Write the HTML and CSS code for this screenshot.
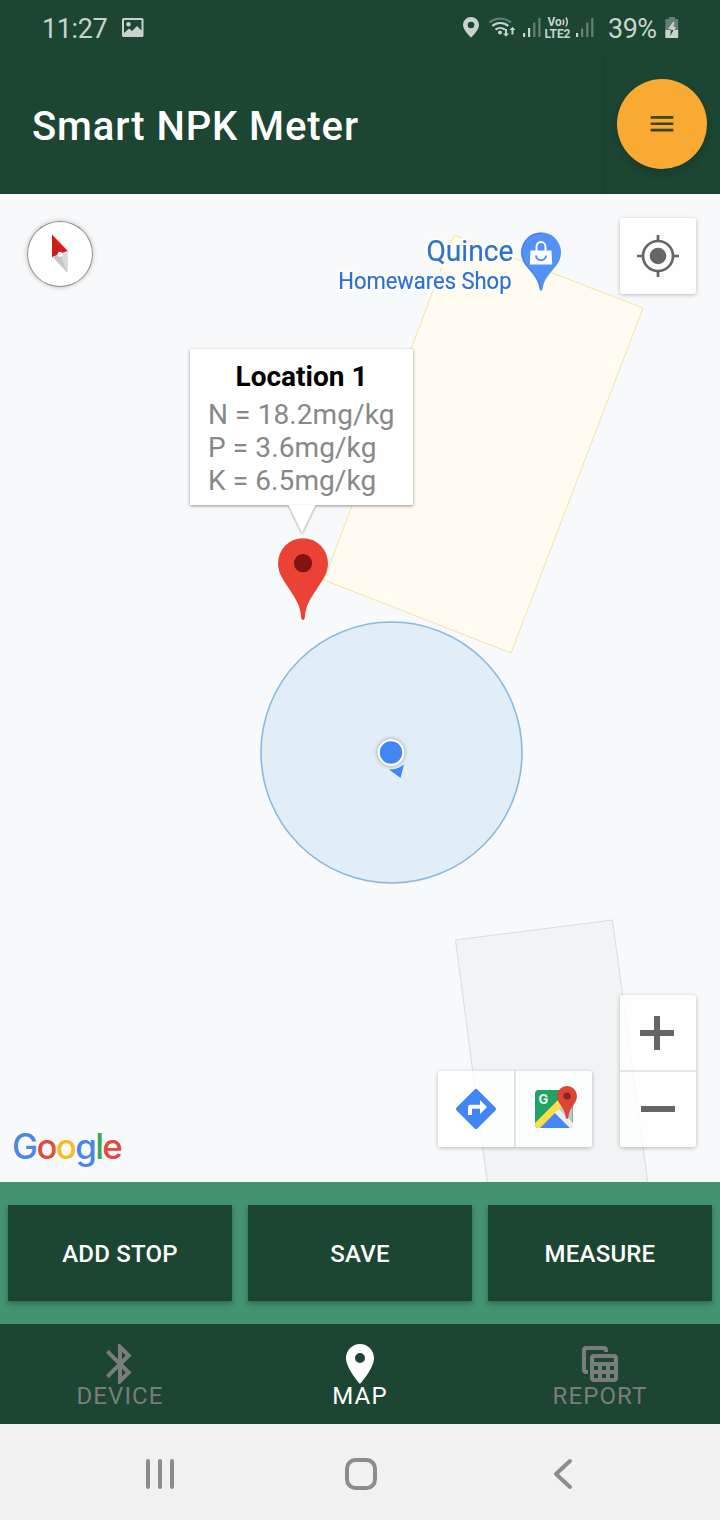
FILE: index.html
```html
<!DOCTYPE html>
<html lang="en">
<head>
<meta charset="utf-8">
<title>Smart NPK Meter</title>
<link rel="stylesheet" href="styles.css">
</head>
<body>
<div class="screen">
  <header class="status">
    <span class="clock">11:27</span>
    <svg class="picture-icon" width="22" height="20" viewBox="0 0 22 20"><path fill-rule="evenodd" d="M2 0h18a1.500 1.500 0 0 1 1.500 1.500v16a1.500 1.500 0 0 1-1.500 1.500H1.500A1.500 1.500 0 0 1 0 17.500v-16A1.500 1.500 0 0 1 1.500 0zM2 2v13l5-4.500 3 2.500 5-5 4.500 4.500V2zM6.500 4a2.300 2.300 0 1 1 0 4.600 2.300 2.300 0 0 1 0-4.600z"/></svg>
    <svg class="signals" width="140" height="32" viewBox="460 10 140 32">
      <path fill-rule="evenodd" d="M471 17a8 8 0 0 0-8 8c0 5.500 8 12.500 8 12.500s8-7 8-12.500a8 8 0 0 0-8-8zm0 4.700a3.300 3.300 0 1 1 0 6.600 3.300 3.300 0 0 1 0-6.600z"/>
      <g fill="none" stroke="#c8d3cd" stroke-width="2.200">
        <path opacity=".4" d="M489.500 22.500c6-5.200 15.500-5.200 21.500 0"/>
        <path d="M492.300 26c4.500-4 11.500-4 16 0M495.500 29.700c2.700-2.300 6.700-2.300 9.400 0"/>
      </g>
      <circle cx="500" cy="32.500" r="2"/>
      <path d="M505 29h2v4.500h2l-3 3.300-3-3.300h2zM511.500 34.500h2v-4.500h2l-3-3.300-3 3.300h2z"/>
      <path d="M523 33h2.200v4H523zM528 28h2.200v9H528zM576 33h2.200v4H576z"/>
      <path opacity=".42" d="M533.200 22.500h2.200V37h-2.200zM538.300 18h2.200v19h-2.200zM581 28.500h2.200V37H581zM586.200 22.500h2.200V37h-2.200zM591.200 18h2.200v19h-2.200z"/>
      <text x="547.500" y="26" class="net">Vo</text>
      <path fill="none" stroke="#c8d3cd" stroke-width="1.500" d="M563 19.500q1.600 2.500 0 5.500M566 17.500q2.600 4.200 0 9"/>
      <text x="544.500" y="37.500" class="net" textLength="26">LTE2</text>
    </svg>
    <span class="charge">39%</span>
    <svg class="battery" width="14" height="22" viewBox="0 0 14 22"><path opacity=".42" d="M4 0h6v2h3.200v11H.3V2H4z"/><path d="M.3 13h12.900v8H.3z"/><path d="M8 5l-5 7h3.200L6 14h3l2-4H8.300L9.500 5z"/><path fill="#1c4532" d="M6 13l-.8 6L8.500 13z"/></svg>
  </header>
  <div class="appbar">
    <h1>Smart NPK Meter</h1>
    <div class="menu-cell"><button class="menu" aria-label="Menu"><svg width="24" height="18" viewBox="0 0 24 18"><path d="M.7 1h22.600v2.700H.7zM.7 7.500h22.600v2.600H.7zM.7 13.700h22.600v2.700H.7z" fill="#3f4310"/></svg></button></div>
  </div>
  <main class="map">
    <svg class="ground" width="720" height="988" viewBox="0 194 720 988">
      <path d="M454 235L643 308 511 653 324 580z" fill="#fffbf0" stroke="#f6e0a4"/>
      <path d="M455.500 940L612.500 920 648 1184H487.500z" fill="#f1f3f4" stroke="#d9dbde"/>
      <circle cx="391.500" cy="752.500" r="130.500" fill="#e1eef8" stroke="#89b9de" stroke-width="1.600"/>
      <path d="M389 769.500q8 .5 15-5l-3.500 13.500z" fill="#4285f4"/>
      <circle class="dot" cx="391" cy="752.500" r="12.300" fill="#4285f4" stroke="#fff" stroke-width="2.200"/>
      <path d="M303 538.200a25 25 0 0 0-25 25c0 10 5.500 17 11 25.500 7 10.500 11.500 17 12.200 29q.2 2.300 1.800 2.300t1.800-2.300c.7-12 5.200-18.500 12.200-29 5.500-8.500 11-15.500 11-25.500a25 25 0 0 0-25-25z" fill="#ea4335"/>
      <circle cx="303" cy="563.200" r="9.100" fill="#811411"/>
    </svg>
    <div class="place">
      <div class="place-text"><span class="place-name">Quince</span><span class="place-kind">Homewares Shop</span></div>
      <svg width="42" height="60" viewBox="520 232 42 60">
        <path d="M541 232.300a20 20 0 0 0-20 20c0 8 4 12.500 9 18.500 5 6.200 8 10 9.300 17.500q.4 2.700 1.700 2.700t1.700-2.700c1.300-7.500 4.300-11.300 9.300-17.500 5-6 9-10.500 9-18.500a20 20 0 0 0-20-20z" fill="#5491f5"/>
        <path d="M541 233.300a19 19 0 0 0-19 19c0 7.500 4 12 9 18 5 6 8 10 9.300 17" fill="none" stroke="#3f7fe8"/>
        <path d="M530.500 250.500h21l.7 14h-22.400z" fill="#fff"/>
        <path d="M536.500 251v-4a4.500 5 0 0 1 9 0v4" fill="none" stroke="#fff" stroke-width="2"/>
        <path d="M536 255.500a5 4.800 0 0 0 10 0" fill="none" stroke="#5491f5" stroke-width="2"/>
      </svg>
    </div>
    <div class="compass"><svg width="66" height="66" viewBox="27 221 66 66"><path d="M52 234.500L67.800 251 60 254 52 257z" fill="#df1b18"/><path d="M52 234.500L60 254l-8 3z" fill="#c91c1c"/><path d="M52.500 257l7.500-3 7.800-3.200v22z" fill="#d9d9d9"/><path d="M52.500 257l7.500-3 7.500 18.800z" fill="#c5c5c5"/><circle cx="60" cy="254.300" r="2.500" fill="#fff"/></svg></div>
    <button class="ctl locate" aria-label="My location"><svg width="42" height="42" viewBox="0 0 42 42"><circle cx="21" cy="21" r="15" fill="none" stroke="#666" stroke-width="2.700"/><circle cx="21" cy="21" r="8.300" fill="#666"/><path d="M21 0v6M21 36v6M0 21h6M36 21h6" stroke="#666" stroke-width="2.700"/></svg></button>
    <section class="info">
      <h2>Location 1</h2>
      <p>N = 18.2mg/kg</p>
      <p>P = 3.6mg/kg</p>
      <p>K = 6.5mg/kg</p>
      <svg class="tail" width="30" height="30" viewBox="0 0 30 30"><path d="M1.500 0h27L15 28z" fill="#fff"/></svg>
    </section>
    <div class="ctl links">
      <button aria-label="Directions"><svg width="42" height="42" viewBox="0 0 42 42"><path d="M19.600 1.500q1.400-1.400 2.800 0l18 18q1.400 1.500 0 3l-18 18q-1.400 1.400-2.800 0l-18-18q-1.400-1.500 0-3z" fill="#4285f4"/><path d="M13 27v-8q0-2.200 2.200-2.200H25V12l7 7-7 7v-5.200h-8V27z" fill="#fff"/></svg></button>
      <button aria-label="Open in Maps"><svg width="44" height="44" viewBox="533 1085 44 44">
        <rect x="535" y="1090" width="38" height="38" rx="3.500" fill="#1fa463"/>
        <path d="M554 1109l18.500-18.500v35q0 2.500-2.500 2.500h-33z" fill="#c5c5c5"/>
        <path d="M538 1128l16-16 16 16z" fill="#4688f1"/>
        <path d="M554 1112l4-4 15 15v2q0 3-3 3z" fill="#eee"/>
        <path d="M535 1123l25-25 4 6-24 24h-2q-3 0-3-3z" fill="#fcdd4b"/>
        <path d="M567 1086a10 10 0 0 0-10 10c0 8 8 11 8.700 21.500q.1 1.300 1.300 1.300t1.300-1.300C569 1107 577 1104 577 1096a10 10 0 0 0-10-10z" fill="#db4437"/>
        <circle cx="567" cy="1096" r="3.600" fill="#85261f"/>
        <text x="538.500" y="1103.500" class="mini-g">G</text>
      </svg></button>
    </div>
    <div class="ctl zoom">
      <button aria-label="Zoom in"><svg width="34" height="34" viewBox="0 0 34 34"><path d="M14 0h6v14h14v6H20v14h-6V20H0v-6h14z" fill="#666"/></svg></button>
      <button aria-label="Zoom out"><svg width="34" height="34" viewBox="0 0 34 34"><path d="M0 14h34v6H0z" fill="#666"/></svg></button>
    </div>
    <div class="brand"><span class="b">G</span><span class="r">o</span><span class="y">o</span><span class="b">g</span><span class="g">l</span><span class="r">e</span></div>
  </main>
  <div class="actions"><button>ADD STOP</button><button>SAVE</button><button>MEASURE</button></div>
  <nav class="tabs">
    <a class="tab"><svg width="40" height="40" viewBox="0 0 40 40"><path fill-rule="evenodd" d="M18 0h2l11.500 11.400L23 20l8.500 8.600L20 40h-2V24.800L8.800 34 6 31.200 17.200 20 6 8.800 8.800 6 18 15.200zM22 7.700v7.500l3.700-3.800zM22 24.800v7.500l3.700-3.700z"/></svg><span>DEVICE</span></a>
    <a class="tab on"><svg width="40" height="40" viewBox="0 0 40 40"><path fill-rule="evenodd" d="M20 0C12.300 0 6 6.300 6 14c0 10.500 14 26 14 26s14-15.500 14-26c0-7.700-6.300-14-14-14zm0 9a5 5 0 1 1 0 10 5 5 0 0 1 0-10z"/></svg><span>MAP</span></a>
    <a class="tab"><svg width="40" height="40" viewBox="0 0 40 40"><path d="M6 2h18q4 0 4 4v2h-4V6H6v20h2v4H6q-4 0-4-4V6q0-4 4-4z"/><path fill-rule="evenodd" d="M14 10h20q4 0 4 4v20q0 4-4 4H14q-4 0-4-4V14q0-4 4-4zM14 14v4h20v-4zM14 22v4h4v-4zM22 22v4h4v-4zM30 22v4h4v-4zM14 30v4h4v-4zM22 30v4h4v-4zM30 30v4h4v-4z"/></svg><span>REPORT</span></a>
  </nav>
  <footer class="sysnav">
    <svg width="28" height="30" viewBox="0 0 28 30"><path d="M2 2v26M14 2v26M26 2v26"/></svg>
    <svg class="home" width="32" height="32" viewBox="0 0 32 32"><rect x="2" y="2" width="28" height="28" rx="8.500"/></svg>
    <svg width="20" height="32" viewBox="0 0 20 32"><path d="M17 3L3 16l14 13"/></svg>
  </footer>
</div>
</body>
</html>
```
FILE: styles.css
```css
* { box-sizing: border-box; }
body { margin: 0; font-family: Roboto, "Liberation Sans", sans-serif; }
h1, h2, p { margin: 0; font-weight: 400; }
button { border: 0; margin: 0; padding: 0; background: none; font: inherit; color: inherit; }
svg { display: block; flex: none; }

.screen { width: 720px; height: 1520px; display: flex; flex-direction: column; overflow: hidden; }

.status { height: 56px; background: #1c4532; color: #c8d3cd; fill: #c8d3cd; display: flex; align-items: center; padding: 0 41px 0 42px; font-size: 27px; }
.clock { width: 80px; letter-spacing: -.4px; padding-top: 1px; }
.signals { margin-left: auto; margin-top: -4px; }
.charge { width: 57px; margin: 1px 0 0 8px; font-size: 27px; letter-spacing: -.5px; }
.picture-icon { margin-top: -1px; }
.status .battery { margin-top: -1px; }
.net { font-size: 12px; font-weight: 700; }

.appbar { height: 138px; background: #1c4532; display: flex; justify-content: space-between; }
.appbar h1 { padding: 47px 0 0 32px; line-height: 48px; font-size: 40px; font-weight: 500; letter-spacing: .900px; color: #fff; }
.menu-cell { width: 117px; padding: 23px 13px 0 12px; border-left: 2px solid #1a4030; }
.menu { width: 90px; height: 90px; border-radius: 50%; background: #f9aa33; display: flex; align-items: center; justify-content: center; box-shadow: 0 4px 8px rgba(0,0,0,.16); }

.map { position: relative; height: 988px; background: #f8f9fb; overflow: hidden; }
.dot { filter: drop-shadow(0 0 2px rgba(0,0,0,.35)); }
.place { position: absolute; top: 38px; right: 158px; display: flex; gap: 7px; }
.place-text { display: flex; flex-direction: column; align-items: flex-end; color: #2b72d3; text-shadow: 3px 0 1px #fffdf8, -3px 0 1px #fffdf8, 0 3px 1px #fffdf8, 0 -3px 1px #fffdf8, 2px 2px 1px #fffdf8, -2px -2px 1px #fffdf8, 2px -2px 1px #fffdf8, -2px 2px 1px #fffdf8; transform: scaleX(.955); transform-origin: right; -webkit-text-stroke: .2px #2b72d3; }
.place-name { font-size: 29.500px; line-height: 38px; }
.place-kind { font-size: 23px; line-height: 23px; margin-right: 2px; }

.compass { position: absolute; left: 27px; top: 27px; width: 66px; height: 66px; border-radius: 50%; background: #fff; box-shadow: inset 0 0 0 1px #8e8e8e, 0 0 5px rgba(0,0,0,.25); }
.ctl { position: absolute; background: rgba(255,255,255,.8); border-radius: 3px; box-shadow: 0 1px 4px rgba(0,0,0,.26); display: flex; }
.ctl button, .locate { display: flex; align-items: center; justify-content: center; }
.locate { top: 24px; right: 24px; width: 76px; height: 76px; }
.links { left: 438px; top: 877px; width: 154px; height: 76px; }
.links button { width: 76px; padding-bottom: 1px; }
.links button + button { width: 78px; border-left: 2px solid #e1e1e1; padding: 0 0 4px 2px; }
.zoom { right: 24px; top: 801px; width: 76px; height: 152px; flex-direction: column; }
.zoom button { height: 75px; padding: 1px 2px 0 0; }
.zoom button + button { height: 77px; border-top: 2px solid #e6e6e6; padding: 0 0 1px; }
.mini-g { font: 700 13px Inter, sans-serif; fill: #eef8f2; }

.info { position: absolute; left: 190px; top: 155px; width: 223px; height: 156px; padding: 10px 18px 0; background: #fff; box-shadow: 0 1px 3px rgba(0,0,0,.42); }
.info h2 { font-size: 28px; line-height: 36px; font-weight: 700; color: #000; text-align: center; white-space: nowrap; }
.info p { font-size: 28px; line-height: 33px; letter-spacing: .100px; color: #888; white-space: nowrap; }
.info h2 + p { margin-top: 3px; }
.tail { position: absolute; left: 97px; top: 156px; filter: drop-shadow(0 1px 1px rgba(0,0,0,.4)); }

.brand { position: absolute; left: 12px; top: 930px; font: 500 35px/44px Inter, sans-serif; letter-spacing: -1.750px; text-shadow: 0 0 3px #fff, 0 0 4px #fff; }
.b { color: #4a85ec; }
.r { color: #e04a3f; }
.y { color: #f4bd1c; }
.g { color: #3ca556; }

.actions { height: 142px; background: #43936f; display: flex; gap: 16px; padding: 23px 8px; }
.actions button { flex: 1; padding-top: 2px; background: #1c4532; color: #fff; font-size: 24px; font-weight: 500; letter-spacing: .200px; box-shadow: 0 3px 5px rgba(0,0,0,.28); }

.tabs { height: 100px; background: #1c4532; display: flex; }
.tab { flex: 1; padding-top: 20px; display: flex; flex-direction: column; align-items: center; color: #7a7d79; fill: #7a7d79; font-size: 24px; line-height: 24px; letter-spacing: 1.100px; }
.tab.on { color: #fff; fill: #fff; }

.sysnav { height: 96px; background: #f1f1f1; display: flex; align-items: center; justify-content: space-between; padding: 4px 147px 0 146px; fill: none; stroke: #8c8c8c; stroke-width: 4; stroke-linecap: round; stroke-linejoin: round; }
.home { margin-right: 5px; }
```
